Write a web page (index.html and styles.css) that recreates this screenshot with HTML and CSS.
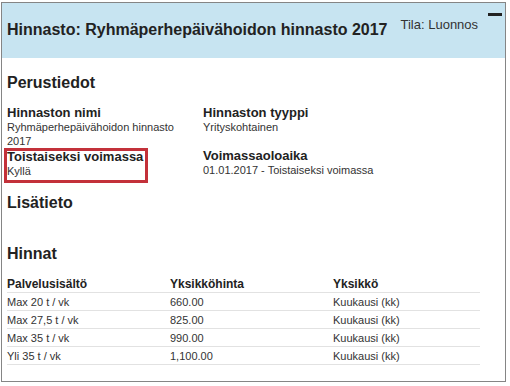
FILE: index.html
```html
<!DOCTYPE html>
<html lang="fi">
<head>
    <meta charset="UTF-8">
    <title>Hinnasto</title>
    <link rel="stylesheet" href="styles.css">
</head>
<body>
    <div class="panel">
        <header class="panel-head">
            <h1>Hinnasto: Ryhmäperhepäivähoidon hinnasto 2017</h1>
            <span class="status">Tila: Luonnos</span>
            <span class="collapse"></span>
        </header>

        <div class="panel-body">
            <h2 class="basic-title">Perustiedot</h2>
            <div class="fields">
                <div class="field">
                    <h4>Hinnaston nimi</h4>
                    <p>Ryhmäperhepäivähoidon hinnasto 2017</p>
                </div>
                <div class="field">
                    <h4>Hinnaston tyyppi</h4>
                    <p>Yrityskohtainen</p>
                </div>
                <div class="field highlight">
                    <h4>Toistaiseksi voimassa</h4>
                    <p>Kyllä</p>
                </div>
                <div class="field">
                    <h4>Voimassaoloaika</h4>
                    <p>01.01.2017 - Toistaiseksi voimassa</p>
                </div>
            </div>

            <h2 class="extra-title">Lisätieto</h2>

            <h2 class="prices-title">Hinnat</h2>
            <table class="prices">
                <thead>
                    <tr><th>Palvelusisältö</th><th>Yksikköhinta</th><th>Yksikkö</th></tr>
                </thead>
                <tbody>
                    <tr><td>Max 20 t / vk</td><td>660.00</td><td>Kuukausi (kk)</td></tr>
                    <tr><td>Max 27,5 t / vk</td><td>825.00</td><td>Kuukausi (kk)</td></tr>
                    <tr><td>Max 35 t / vk</td><td>990.00</td><td>Kuukausi (kk)</td></tr>
                    <tr><td>Yli 35 t / vk</td><td>1,100.00</td><td>Kuukausi (kk)</td></tr>
                </tbody>
            </table>
        </div>
    </div>
</body>
</html>
```

FILE: styles.css
```css
body {
    font-family: 'Liberation Sans', Arial, sans-serif;
    color: #222;
    background: white;
    margin: 0;
    padding: 2px 0 0 1px;
}

.panel {
    position: relative;
    width: 505px;
    height: 380px;
    box-sizing: border-box;
    border: 1px solid #858585;
}

.panel-head {
    display: flex;
    align-items: flex-start;
    height: 55px;
    padding: 0 5px;
    background-color: #c7e4f1;
}

.panel-head h1 {
    font-size: 16px;
    font-weight: bold;
    margin: 0;
    padding-top: 18px;
    line-height: 18px;
}

.status {
    font-size: 13px;
    margin: 14px 0 0 13px;
    color: #333;
}

.collapse {
    position: absolute;
    top: 10px;
    right: 3px;
    width: 14px;
    height: 3px;
    background-color: #222;
}

.panel-body {
    padding: 0 5px;
}

.panel-body h2 {
    font-size: 16px;
    font-weight: bold;
    margin: 0;
    line-height: 20px;
}

.basic-title {
    padding-top: 15px;
}

.extra-title {
    padding-top: 10px;
}

.prices-title {
    padding-top: 31px;
}

.fields {
    display: grid;
    grid-template-columns: 196px 1fr;
    margin-top: 12px;
}

.field h4 {
    font-size: 13px;
    font-weight: bold;
    margin: 0;
    line-height: 15px;
    color: #222;
}

.field p {
    font-size: 11px;
    margin: 0;
    line-height: 14px;
    color: #333;
    max-width: 180px;
}

.field:nth-child(2) p,
.field:nth-child(4) p {
    max-width: none;
}

.highlight {
    margin: 0 55px 0 -3px;
    padding-left: 0;
    border: 3px solid #c3313a;
}

.highlight h4 {
    line-height: 11px;
}

.highlight p {
    line-height: 18px;
}

.prices {
    width: 473px;
    margin-top: 12px;
    border-collapse: collapse;
    font-size: 11px;
    color: #333;
}

.prices th {
    font-size: 12px;
    font-weight: bold;
    text-align: left;
    padding: 0;
    line-height: 16px;
    color: #222;
    border-bottom: 1px solid #e2e2e2;
}

.prices td {
    padding: 1px 0 0;
    line-height: 16px;
    border-bottom: 1px solid #e2e2e2;
}

.prices th:nth-child(1) { width: 163px; }
.prices th:nth-child(2) { width: 163px; }
```
